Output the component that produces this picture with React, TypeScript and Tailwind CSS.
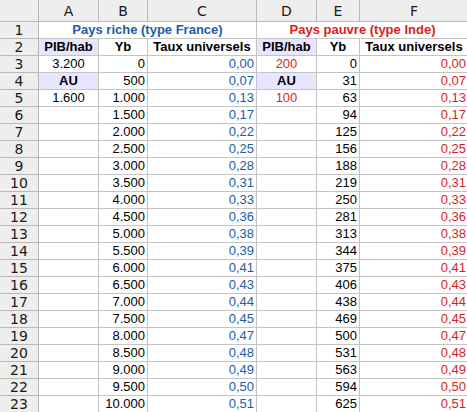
import React from "react";

const BLUE = "text-[#1d5ca6]";
const RED = "text-[#d81e1e]";

const yb = Array.from({ length: 21 }, (_, i) => i * 500);
const taux = ["0,00","0,07","0,13","0,17","0,22","0,25","0,28","0,31","0,33","0,36","0,38","0,39","0,41","0,43","0,44","0,45","0,47","0,48","0,49","0,50","0,51"];
const ybInde = [0,31,63,94,125,156,188,219,250,281,313,344,375,406,438,469,500,531,563,594,625];

const fmt = (n: number) => n.toString().replace(/\B(?=(\d{3})+(?!\d))/g, ".");

const gridCols = "grid grid-cols-[39px_60px_49px_109px_60px_43px_109px]";
const cell = "border-r border-b border-[#c4c4c4] h-[17px] leading-[16px] px-[2px] overflow-hidden whitespace-nowrap";
const rowHead = "border-r border-b border-[#b8b8b8] bg-[#eeeeee] h-[17px] leading-[17px] text-center text-[14px] text-[#1a1a1a] [font-family:'DejaVu_Sans',sans-serif]";

function RowHead({ n }: { n: number }) {
  return <div className={rowHead}>{n}</div>;
}

export default function App() {
  const rowsLeftA: Record<number, React.ReactNode> = {
    0: <div className={`${cell} text-center text-black`}>3.200</div>,
    1: <div className={`${cell} text-center font-bold text-black bg-[#e6e6ff]`}>AU</div>,
    2: <div className={`${cell} text-center text-black`}>1.600</div>,
  };
  const rowsLeftD: Record<number, React.ReactNode> = {
    0: <div className={`${cell} text-center ${RED}`}>200</div>,
    1: <div className={`${cell} text-center font-bold text-black bg-[#e6e6ff]`}>AU</div>,
    2: <div className={`${cell} text-center ${RED}`}>100</div>,
  };
  return (
    <div className="w-[467px] h-[412px] overflow-hidden bg-white text-[13px] [font-family:'Liberation_Sans',Arial,sans-serif]">
      <div className="w-[469px]">
        {/* column header */}
        <div className={`${gridCols} h-[22px]`}>
          {["", "A", "B", "C", "D", "E", "F"].map((c, i) => (
            <div
              key={i}
              className="border-r border-b border-[#b8b8b8] bg-[#eeeeee] h-[22px] leading-[22px] text-center text-[14px] text-[#1a1a1a] [font-family:'DejaVu_Sans',sans-serif]"
            >
              {c}
            </div>
          ))}
        </div>
        {/* row 1 */}
        <div className={gridCols}>
          <RowHead n={1} />
          <div className={`${cell} col-span-3 text-center font-bold ${BLUE}`}>Pays riche (type France)</div>
          <div className={`${cell} col-span-3 text-center font-bold ${RED}`}>Pays pauvre (type Inde)</div>
        </div>
        {/* row 2 */}
        <div className={gridCols}>
          <RowHead n={2} />
          <div className={`${cell} text-center font-bold text-black bg-[#e6e6ff]`}>PIB/hab</div>
          <div className={`${cell} text-center font-bold text-black`}>Yb</div>
          <div className={`${cell} text-center font-bold text-black`}>Taux universels</div>
          <div className={`${cell} text-center font-bold text-black bg-[#e6e6ff]`}>PIB/hab</div>
          <div className={`${cell} text-center font-bold text-black`}>Yb</div>
          <div className={`${cell} text-center font-bold text-black`}>Taux universels</div>
        </div>
        {yb.map((v, i) => (
          <div key={i} className={gridCols}>
            <RowHead n={i + 3} />
            {rowsLeftA[i] ?? <div className={cell} />}
            <div className={`${cell} text-right text-black`}>{fmt(v)}</div>
            <div className={`${cell} text-right ${BLUE}`}>{taux[i]}</div>
            {rowsLeftD[i] ?? <div className={cell} />}
            <div className={`${cell} text-right text-black`}>{ybInde[i]}</div>
            <div className={`${cell} text-right ${RED}`}>{taux[i]}</div>
          </div>
        ))}
      </div>
    </div>
  );
}
